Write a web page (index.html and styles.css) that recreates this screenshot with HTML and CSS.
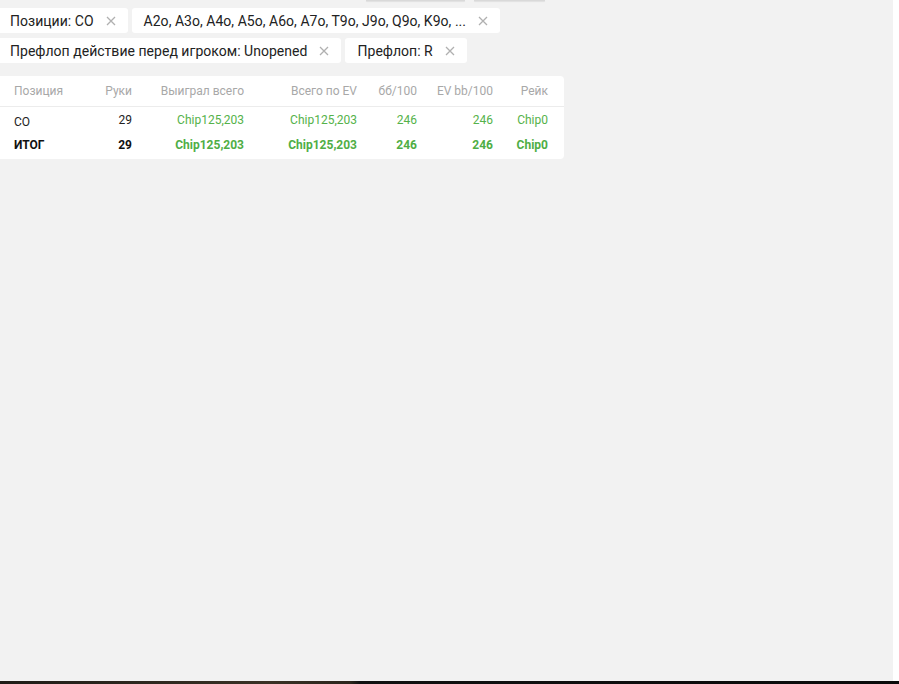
FILE: index.html
```html
<!DOCTYPE html>
<html lang="ru">
<head>
    <meta charset="UTF-8">
    <title>Отчёт</title>
    <link rel="stylesheet" href="styles.css">
</head>
<body>
    <div class="screen">
        <main class="content">
            <div class="toolbar">
                <span class="tool-btn wide"></span>
                <span class="tool-btn"></span>
            </div>

            <div class="filters">
                <span class="chip">Позиции: CO
                    <svg class="chip-x" width="10" height="10" viewBox="0 0 10 10"><path d="M1 1L9 9M9 1L1 9"/></svg>
                </span>
                <span class="chip">A2o, A3o, A4o, A5o, A6o, A7o, T9o, J9o, Q9o, K9o, ...
                    <svg class="chip-x" width="10" height="10" viewBox="0 0 10 10"><path d="M1 1L9 9M9 1L1 9"/></svg>
                </span>
                <span class="chip">Префлоп действие перед игроком: Unopened
                    <svg class="chip-x" width="10" height="10" viewBox="0 0 10 10"><path d="M1 1L9 9M9 1L1 9"/></svg>
                </span>
                <span class="chip">Префлоп: R
                    <svg class="chip-x" width="10" height="10" viewBox="0 0 10 10"><path d="M1 1L9 9M9 1L1 9"/></svg>
                </span>
            </div>

            <div class="card">
                <table class="stats">
                    <colgroup>
                        <col style="width:90px">
                        <col style="width:42px">
                        <col style="width:112px">
                        <col style="width:113px">
                        <col style="width:60px">
                        <col style="width:76px">
                        <col style="width:71px">
                    </colgroup>
                    <thead>
                        <tr>
                            <th class="first">Позиция</th>
                            <th>Руки</th>
                            <th>Выиграл всего</th>
                            <th>Всего по EV</th>
                            <th>бб/100</th>
                            <th>EV bb/100</th>
                            <th class="last">Рейк</th>
                        </tr>
                    </thead>
                    <tbody>
                        <tr>
                            <td class="first"><span class="pos">CO</span></td>
                            <td>29</td>
                            <td class="win">Chip125,203</td>
                            <td class="win">Chip125,203</td>
                            <td class="win">246</td>
                            <td class="win">246</td>
                            <td class="win last">Chip0</td>
                        </tr>
                        <tr class="total">
                            <td class="first">ИТОГ</td>
                            <td>29</td>
                            <td class="win">Chip125,203</td>
                            <td class="win">Chip125,203</td>
                            <td class="win">246</td>
                            <td class="win">246</td>
                            <td class="win last">Chip0</td>
                        </tr>
                    </tbody>
                </table>
            </div>
        </main>
        <div class="side"></div>
    </div>
    <div class="taskbar"></div>
</body>
</html>
```

FILE: styles.css
```css
html, body {
    margin: 0;
    padding: 0;
    background: #fff;
    font-family: Roboto, "Liberation Sans", sans-serif;
    overflow: hidden;
}

.screen {
    display: flex;
    height: 681px;
}

.content {
    width: 893px;
    background-color: #f2f2f2;
}

.side {
    flex: 1;
    background: #fff;
}

.toolbar {
    display: flex;
    gap: 9px;
    height: 1px;
    margin-left: 366px;
}

.tool-btn {
    width: 71px;
    height: 1px;
    background: #d9d9d9;
    box-shadow: 0 1px 1px rgba(0, 0, 0, 0.08);
}

.tool-btn.wide {
    width: 99px;
}

.filters {
    display: flex;
    flex-wrap: wrap;
    gap: 5px 4px;
    width: 520px;
    margin: 7px 0 0 -2px;
}

.chip {
    display: inline-flex;
    align-items: center;
    gap: 12px;
    height: 25px;
    padding: 0 12px;
    background: #fff;
    border-radius: 3px;
    font-size: 14px;
    letter-spacing: 0.03px;
    color: #222;
    white-space: nowrap;
}

.chip-x path {
    stroke: #b0b0b0;
    stroke-width: 1.3;
    fill: none;
}

.card {
    width: 564px;
    margin-top: 13px;
    padding-bottom: 2px;
    background: #fff;
    border-radius: 0 4px 4px 0;
}

.stats {
    border-collapse: collapse;
    table-layout: fixed;
    width: 564px;
    font-size: 12px;
}

.stats th, .stats td {
    padding: 0;
    text-align: right;
    white-space: nowrap;
}

.stats th {
    height: 30px;
    font-weight: normal;
    color: #a8a8a8;
    border-bottom: 1px solid #ececec;
}

.stats td {
    height: 25px;
    color: #222;
}

.stats .first {
    text-align: left;
    padding-left: 14px;
}

.stats .last {
    padding-right: 16px;
}

.stats .pos {
    position: relative;
    top: 2px;
}

.stats .win {
    color: #55b24a;
}

.stats .total td {
    font-weight: bold;
    color: #111;
}

.stats .total td.win {
    color: #4fae45;
}

.taskbar {
    height: 3px;
    background: linear-gradient(to right, #1f1c17 0%, #3a3125 30%, #2b251c 39%, #111 40%, #0a0a0a 100%);
}
```
